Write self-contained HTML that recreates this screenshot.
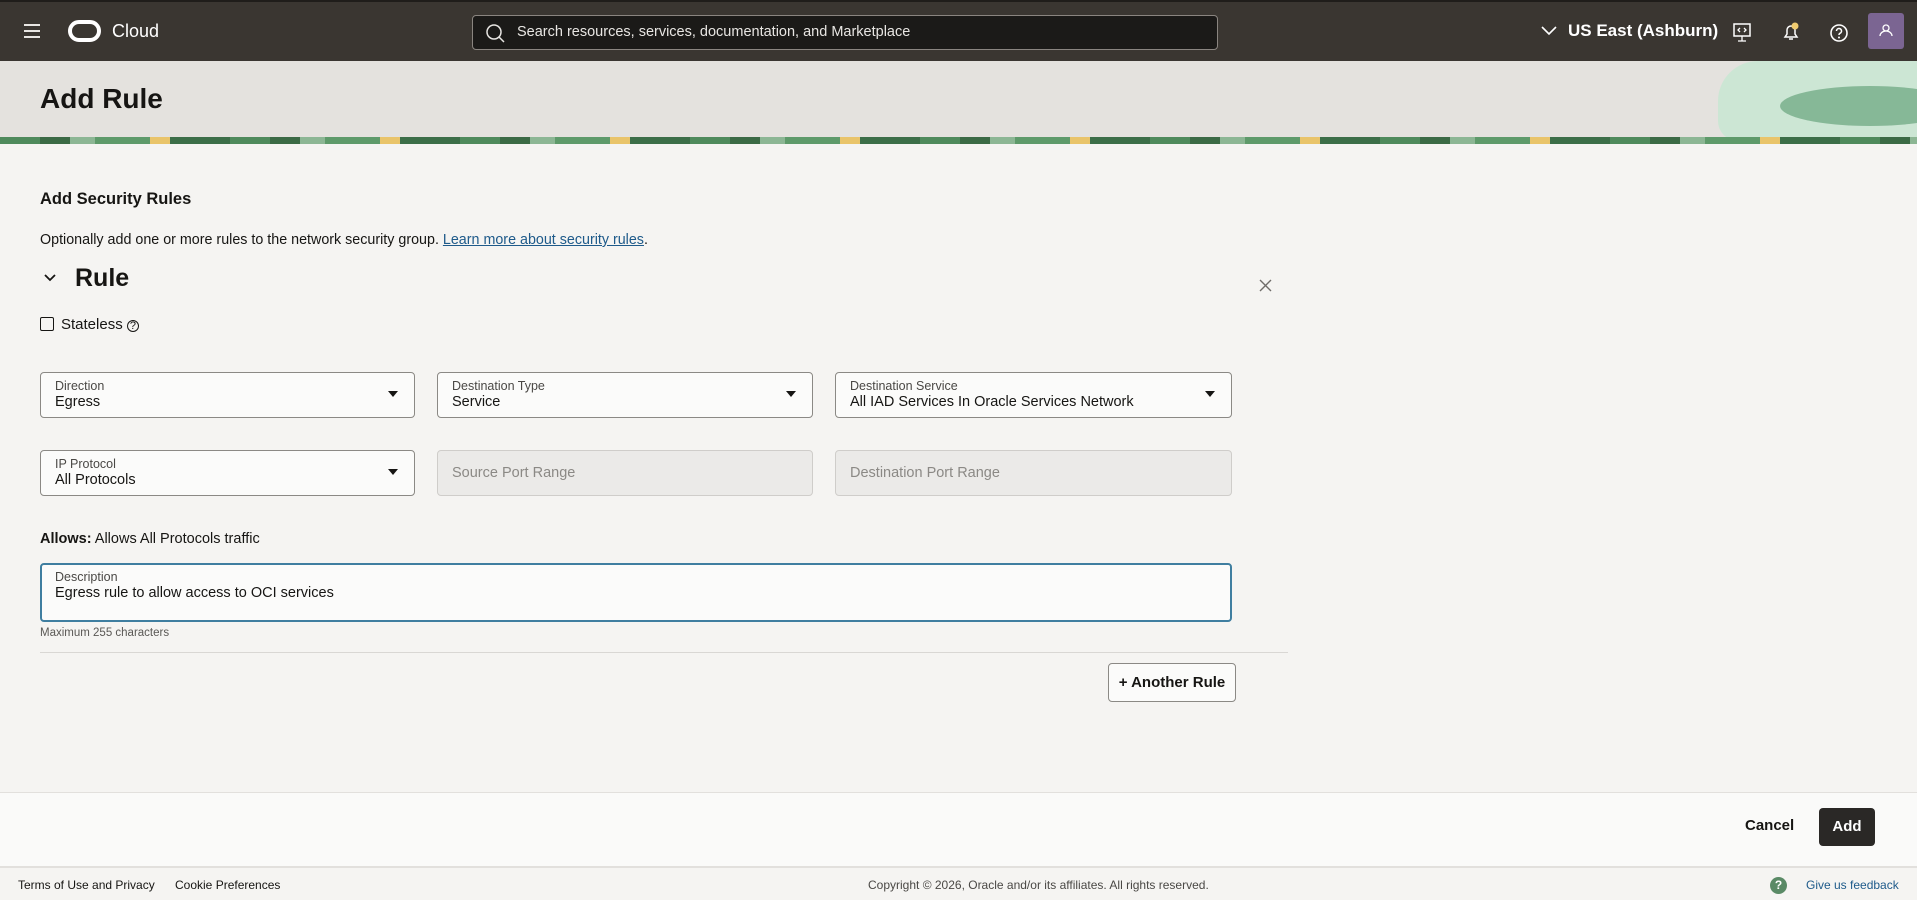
<!DOCTYPE html>
<html><head><meta charset="utf-8"><style>
*{box-sizing:border-box;margin:0;padding:0}
body{width:1917px;height:900px;overflow:hidden;background:#f5f4f2;font-family:"Liberation Sans",sans-serif;color:#161513;position:relative}
.hdr{position:absolute;top:0;left:0;width:1917px;height:61px;background:#3a3631;border-top:2px solid #1f1d1a}
.abs{position:absolute}
.search{left:472px;top:13px;width:746px;height:35px;background:#1b1a18;border:1px solid #8a8580;border-radius:4px;color:#e8e6e3;font-size:14.5px;line-height:33px;padding-left:44px}
.banner{position:absolute;top:61px;left:0;width:1917px;height:83px;background:#e4e2de;overflow:hidden}
.strip{position:absolute;left:0;top:76px;width:1917px;height:8px;background:repeating-linear-gradient(90deg,#4f8a5c 0 40px,#3b6a45 40px 70px,#8cb694 70px 95px,#5e9a6a 95px 150px,#e9c46a 150px 170px,#3c6e48 170px 230px)}
.field{position:absolute;height:46px;border:1px solid #8b8985;border-radius:4px;background:#fbfbfa}
.field .l{position:absolute;left:14px;top:6px;font-size:12.5px;color:#4a4845}
.field .v{position:absolute;left:14px;top:21px;font-size:14.5px;color:#161513}
.field .a{position:absolute;right:16px;top:18px;width:0;height:0;border-left:5px solid transparent;border-right:5px solid transparent;border-top:6px solid #161513}
.dis{background:#ebeae8;border-color:#cfcdca}
.dis .p{position:absolute;left:14px;top:14px;font-size:14.5px;color:#8b8985}
</style></head><body>
<div class="hdr">
 <div class="abs" style="left:24px;top:22px;width:16px"><div style="height:2px;background:#e8e6e3;margin-bottom:4px"></div><div style="height:2px;background:#e8e6e3;margin-bottom:4px"></div><div style="height:2px;background:#e8e6e3"></div></div>
 <div class="abs" style="left:68px;top:18px;width:33px;height:22px;border:4px solid #fff;border-radius:11px"></div>
 <div class="abs" style="left:112px;top:19px;color:#fff;font-size:18px">Cloud</div>
 <div class="abs search">Search resources, services, documentation, and Marketplace
  <svg class="abs" style="left:12px;top:7px" width="20" height="20" viewBox="0 0 20 20"><circle cx="9" cy="9" r="7" fill="none" stroke="#e8e6e3" stroke-width="1.5"/><path d="M14 14l5 5" stroke="#e8e6e3" stroke-width="1.5"/></svg></div>
 <svg class="abs" style="left:1541px;top:24px" width="16" height="10"><path d="M1 1l7 7 7-7" fill="none" stroke="#fff" stroke-width="1.6"/></svg>
 <div class="abs" style="left:1568px;top:19px;color:#fff;font-size:17px;font-weight:bold">US East (Ashburn)</div>
 <svg class="abs" style="left:1733px;top:21px" width="18" height="20"><rect x="1" y="1" width="16" height="12" fill="none" stroke="#fff" stroke-width="1.5"/><path d="M9 13v5M5 18h8M7 5l-2 2 2 2M11 5l2 2-2 2" stroke="#fff" fill="none" stroke-width="1.3"/></svg>
 <svg class="abs" style="left:1782px;top:20px" width="18" height="20"><path d="M3 15h12l-2-3V8a4 4 0 0 0-8 0v4z M7 17h4" fill="none" stroke="#fff" stroke-width="1.5"/><circle cx="13" cy="4" r="3.5" fill="#f0cc70"/></svg>
 <svg class="abs" style="left:1829px;top:21px" width="20" height="20"><circle cx="10" cy="10" r="8" fill="none" stroke="#fff" stroke-width="1.6"/><path d="M7.5 8a2.5 2.5 0 1 1 3.5 2.3c-.8.4-1 .9-1 1.7" fill="none" stroke="#fff" stroke-width="1.5"/><circle cx="10" cy="14.5" r="1" fill="#fff"/></svg>
 <div class="abs" style="left:1868px;top:11px;width:36px;height:36px;background:#7b6592;border-radius:3px"><svg width="36" height="36"><circle cx="18" cy="15" r="3" fill="none" stroke="#fff" stroke-width="1.3"/><path d="M12 23a6 5 0 0 1 12 0" fill="none" stroke="#fff" stroke-width="1.3"/></svg></div>
</div>
<div class="banner">
 <div class="abs" style="left:40px;top:22px;font-size:28px;font-weight:bold">Add Rule</div>
 <div class="abs" style="left:1718px;top:0;width:260px;height:80px;background:#cce6d4;border-radius:40px 0 0 20px"></div>
 <div class="abs" style="left:1780px;top:25px;width:180px;height:40px;background:#86b897;border-radius:50%"></div>
 <div class="strip"></div>
</div>
<div class="abs" style="left:40px;top:190px;font-size:16.5px;font-weight:bold">Add Security Rules</div>
<div class="abs" style="left:40px;top:232px;font-size:14.3px">Optionally add one or more rules to the network security group. <span style="color:#1e5a8a;text-decoration:underline">Learn more about security rules</span>.</div>
<svg class="abs" style="left:44px;top:274px" width="12" height="8"><path d="M1 1l5 5 5-5" fill="none" stroke="#161513" stroke-width="1.8"/></svg>
<div class="abs" style="left:75px;top:264px;font-size:25px;font-weight:bold">Rule</div>
<svg class="abs" style="left:1259px;top:279px" width="13" height="13"><path d="M1 1l11 11M12 1L1 12" stroke="#6f6c69" stroke-width="1.4"/></svg>
<div class="abs" style="left:40px;top:317px;width:14px;height:14px;border:1.5px solid #161513;border-radius:2px"></div>
<div class="abs" style="left:61px;top:316px;font-size:15px">Stateless <span style="font-size:11px;border:1px solid #161513;border-radius:50%;display:inline-block;width:12px;height:12px;line-height:11px;text-align:center">?</span></div>
<div class="field" style="left:40px;top:372px;width:375px"><div class="l">Direction</div><div class="v">Egress</div><div class="a"></div></div>
<div class="field" style="left:437px;top:372px;width:376px"><div class="l">Destination Type</div><div class="v">Service</div><div class="a"></div></div>
<div class="field" style="left:835px;top:372px;width:397px"><div class="l">Destination Service</div><div class="v">All IAD Services In Oracle Services Network</div><div class="a"></div></div>
<div class="field" style="left:40px;top:450px;width:375px"><div class="l">IP Protocol</div><div class="v">All Protocols</div><div class="a"></div></div>
<div class="field dis" style="left:437px;top:450px;width:376px"><div class="p">Source Port Range</div></div>
<div class="field dis" style="left:835px;top:450px;width:397px"><div class="p">Destination Port Range</div></div>
<div class="abs" style="left:40px;top:531px;font-size:14.5px"><b>Allows:</b> Allows All Protocols traffic</div>
<div class="field" style="left:40px;top:563px;width:1192px;height:59px;border:2px solid #3f7ea0"><div class="l" style="left:13px;top:5px">Description</div><div class="v" style="left:13px;top:20px">Egress rule to allow access to OCI services</div></div>
<div class="abs" style="left:40px;top:627px;font-size:11.5px;color:#5a5855">Maximum 255 characters</div>
<div class="abs" style="left:40px;top:652px;width:1248px;height:1px;background:#d9d7d4"></div>
<div class="abs" style="left:1108px;top:663px;width:128px;height:39px;border:1px solid #8b8985;border-radius:4px;background:#fbfbfa;font-size:15px;font-weight:bold;text-align:center;line-height:37px">+ Another Rule</div>
<div class="abs" style="left:0;top:792px;width:1917px;height:76px;background:#fafaf9;border-top:1px solid #e2e0dd;border-bottom:2px solid #e2e0dd"></div>
<div class="abs" style="left:1745px;top:817px;font-size:15px;font-weight:bold">Cancel</div>
<div class="abs" style="left:1819px;top:808px;width:56px;height:38px;background:#2a2826;border-radius:4px;color:#fff;font-size:15px;font-weight:bold;text-align:center;line-height:38px">Add</div>
<div class="abs" style="left:18px;top:878px;font-size:12px">Terms of Use and Privacy</div>
<div class="abs" style="left:175px;top:878px;font-size:12px">Cookie Preferences</div>
<div class="abs" style="left:868px;top:878px;font-size:12px;color:#4a4845">Copyright © 2026, Oracle and/or its affiliates. All rights reserved.</div>
<div class="abs" style="left:1770px;top:877px;width:17px;height:17px;border-radius:50%;background:#5a8a66;color:#fff;font-size:12px;font-weight:bold;text-align:center;line-height:17px">?</div>
<div class="abs" style="left:1806px;top:878px;font-size:12px;color:#1e5a8a">Give us feedback</div>
</body></html>
